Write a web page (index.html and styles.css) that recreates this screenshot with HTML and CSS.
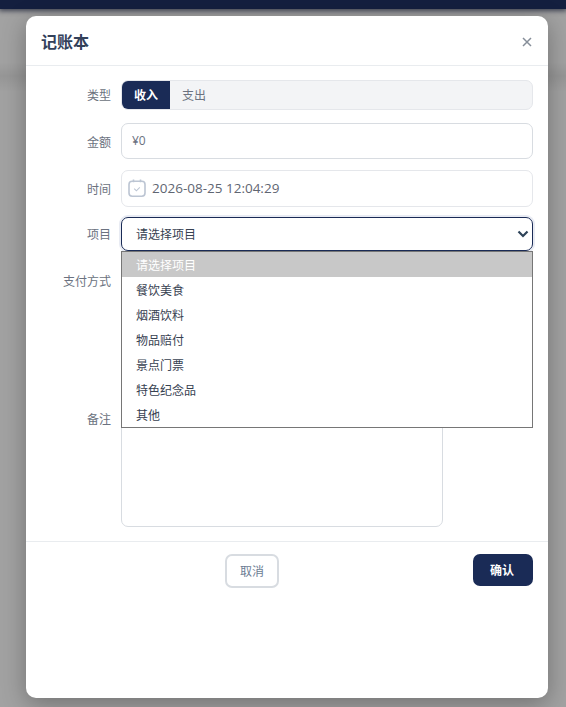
FILE: index.html
```
<!DOCTYPE html>
<html lang="zh">
<head>
<meta charset="utf-8">
<title>记账本</title>
<link rel="stylesheet" href="styles.css">
</head>
<body>
<div class="topbar"></div>
<div class="overlay">
  <div class="modal">
    <header class="modal-head">
      <h1 class="modal-title">记账本</h1>
      <svg class="close" viewBox="0 0 10 10" width="10" height="10"><path d="M1 1l8 8M9 1l-8 8"/></svg>
    </header>
    <div class="form">
      <div class="row row-type">
        <div class="label">类型</div>
        <div class="tabs"><span class="tab tab-on">收入</span><span class="tab">支出</span></div>
      </div>
      <div class="row row-amount">
        <div class="label label-low">金额</div>
        <div class="field amount">¥0</div>
      </div>
      <div class="row row-time">
        <div class="label">时间</div>
        <div class="field time">
          <svg class="cal" viewBox="0 0 18 18" width="18" height="18"><rect x="1" y="2.2" width="16" height="15" rx="3.2"/><path class="tick" d="M5.5 .4v2.8M12.5 .4v2.8"/><path class="check" d="M6.2 9.6l2.2 2.2 3.4-3.4"/></svg>
          <span>2026-08-25 12:04:29</span>
        </div>
      </div>
      <div class="row row-item">
        <div class="label">项目</div>
        <div class="select-wrap">
          <div class="select">
            <span>请选择项目</span>
            <svg class="chev" viewBox="0 0 12 8" width="12" height="8"><path d="M1.5 1.5L6 6l4.5-4.5"/></svg>
          </div>
          <ul class="menu">
            <li class="opt opt-on">请选择项目</li>
            <li class="opt">餐饮美食</li>
            <li class="opt">烟酒饮料</li>
            <li class="opt">物品赔付</li>
            <li class="opt">景点门票</li>
            <li class="opt">特色纪念品</li>
            <li class="opt">其他</li>
          </ul>
        </div>
      </div>
      <div class="row row-pay">
        <div class="label">支付方式</div>
      </div>
      <div class="row row-note">
        <div class="label label-note">备注</div>
        <div class="note"></div>
      </div>
    </div>
    <footer class="modal-foot">
      <button class="btn btn-cancel">取消</button>
      <button class="btn btn-ok">确认</button>
    </footer>
  </div>
</div>
</body>
</html>
```

FILE: styles.css
```
* { box-sizing: border-box; }
html, body { margin: 0; height: 100%; }
body {
  width: 566px; height: 707px; overflow: hidden;
  background:
    linear-gradient(180deg, transparent 62px, rgba(0,0,0,.07) 76px, transparent 92px),
    #a2a2a2;
  font-family: "Noto Sans CJK SC", "Noto Sans", sans-serif;
  color: #374151;
}
.topbar {
  height: 9px;
  background: #141f3f;
  box-shadow: 0 1px 5px 1px #3f4352;
}
.overlay { padding: 7px 18px 9px 26px; }
.modal {
  width: 522px; height: 682px;
  background: #fff;
  border-radius: 10px;
  box-shadow: 0 6px 24px rgba(0,0,0,.3);
  display: flex; flex-direction: column;
}
.modal-head {
  height: 50px;
  border-bottom: 1px solid #e9ecef;
  padding: 0 16px 0 15px;
  display: flex; align-items: center; justify-content: space-between;
}
.modal-title { margin: 0; font-size: 16px; font-weight: 600; color: #33415a; line-height: 50px; }
.close { fill: none; stroke: #868e99; stroke-width: 1.5; margin: 2px 0 0 0; }
.form { padding-top: 14px; height: 475px; }
.row { display: flex; }
.label {
  width: 85px;
  text-align: right;
  font-size: 12px; line-height: 18px;
  color: #6b7280;
  flex: none;
}
.tabs, .field, .select-wrap, .note { margin-left: 10px; }
.row-type { height: 30px; align-items: center; margin-bottom: 13px; }
.tabs {
  width: 412px; height: 30px;
  background: #f3f4f6;
  border: 1px solid #e5e7eb;
  border-radius: 7px;
  display: flex; overflow: hidden;
  font-size: 12px;
}
.tab { padding: 0 12px; line-height: 28px; color: #6b7280; }
.tab-on { background: #1a2b56; color: #fff; font-weight: 700; }
.row-amount { height: 36px; align-items: center; margin-bottom: 11px; }
.label-low { padding-top: 2px; }
.field {
  width: 412px;
  border: 1px solid #d8dce1;
  border-radius: 7px;
  background: #fff;
  display: flex; align-items: center;
}
.amount { height: 36px; padding: 0 0 2px 10px; font-size: 12px; color: #6b7280; font-family: "Open Sans", sans-serif; }
.row-time { height: 37px; align-items: center; margin-bottom: 10px; }
.time { height: 37px; border-color: #e5e7eb; padding-left: 6px; gap: 6px; font-size: 13.5px; color: #5f6672; font-family: "Open Sans", sans-serif; }
.time span { margin-top: -1px; }
.cal { fill: none; stroke: #bcc5d3; stroke-width: 1.6; margin-top: -2px; }
.check { stroke: #bcc5d3; stroke-width: 1.1; }
.row-item { height: 34px; align-items: center; margin-bottom: 20px; }
.select-wrap { position: relative; width: 412px; height: 34px; }
.select {
  height: 34px;
  border: 1.5px solid #1a2b56;
  border-radius: 7px;
  box-shadow: 0 0 0 2px #e8ebf3;
  padding: 0 3px 2px 14px;
  display: flex; align-items: center; justify-content: space-between;
  font-size: 12px; color: #374151;
}
.chev { fill: none; stroke: #2d4258; stroke-width: 2.2; margin-top: 2px; }
.menu {
  position: absolute; left: 0; top: 34px; z-index: 2;
  width: 412px; height: 177px;
  margin: 0; padding: 0; list-style: none;
  background: #fff;
  border: 1px solid #767676;
}
.opt { height: 25px; line-height: 25px; padding-left: 14px; font-size: 12px; color: #374151; }
.opt-on { background: #c8c8c8; color: #fff; }
.row-pay { height: 128px; padding-top: 1px; }
.row-note { height: 128px; }
.label-note { padding-top: 11px; }
.note {
  width: 322px; height: 128px;
  border: 1px solid #d8dce1;
  border-radius: 7px;
  background: #fff;
}
.modal-foot {
  border-top: 1px solid #e9ecef;
  height: 157px;
  padding: 12px 15px 0 0;
  display: flex; align-items: flex-start;
}
.btn { font-family: inherit; font-size: 12px; border-radius: 7px; padding: 0 0 2px; }
.btn-cancel {
  margin-left: 199px;
  width: 54px; height: 34px;
  background: #fff; border: 2px solid #d8dce1; color: #6b7c93;
}
.btn-ok {
  margin-left: auto;
  width: 60px; height: 32px;
  padding-right: 2px;
  background: #1a2b56; border: 0; color: #fff; font-weight: 700;
}
```
